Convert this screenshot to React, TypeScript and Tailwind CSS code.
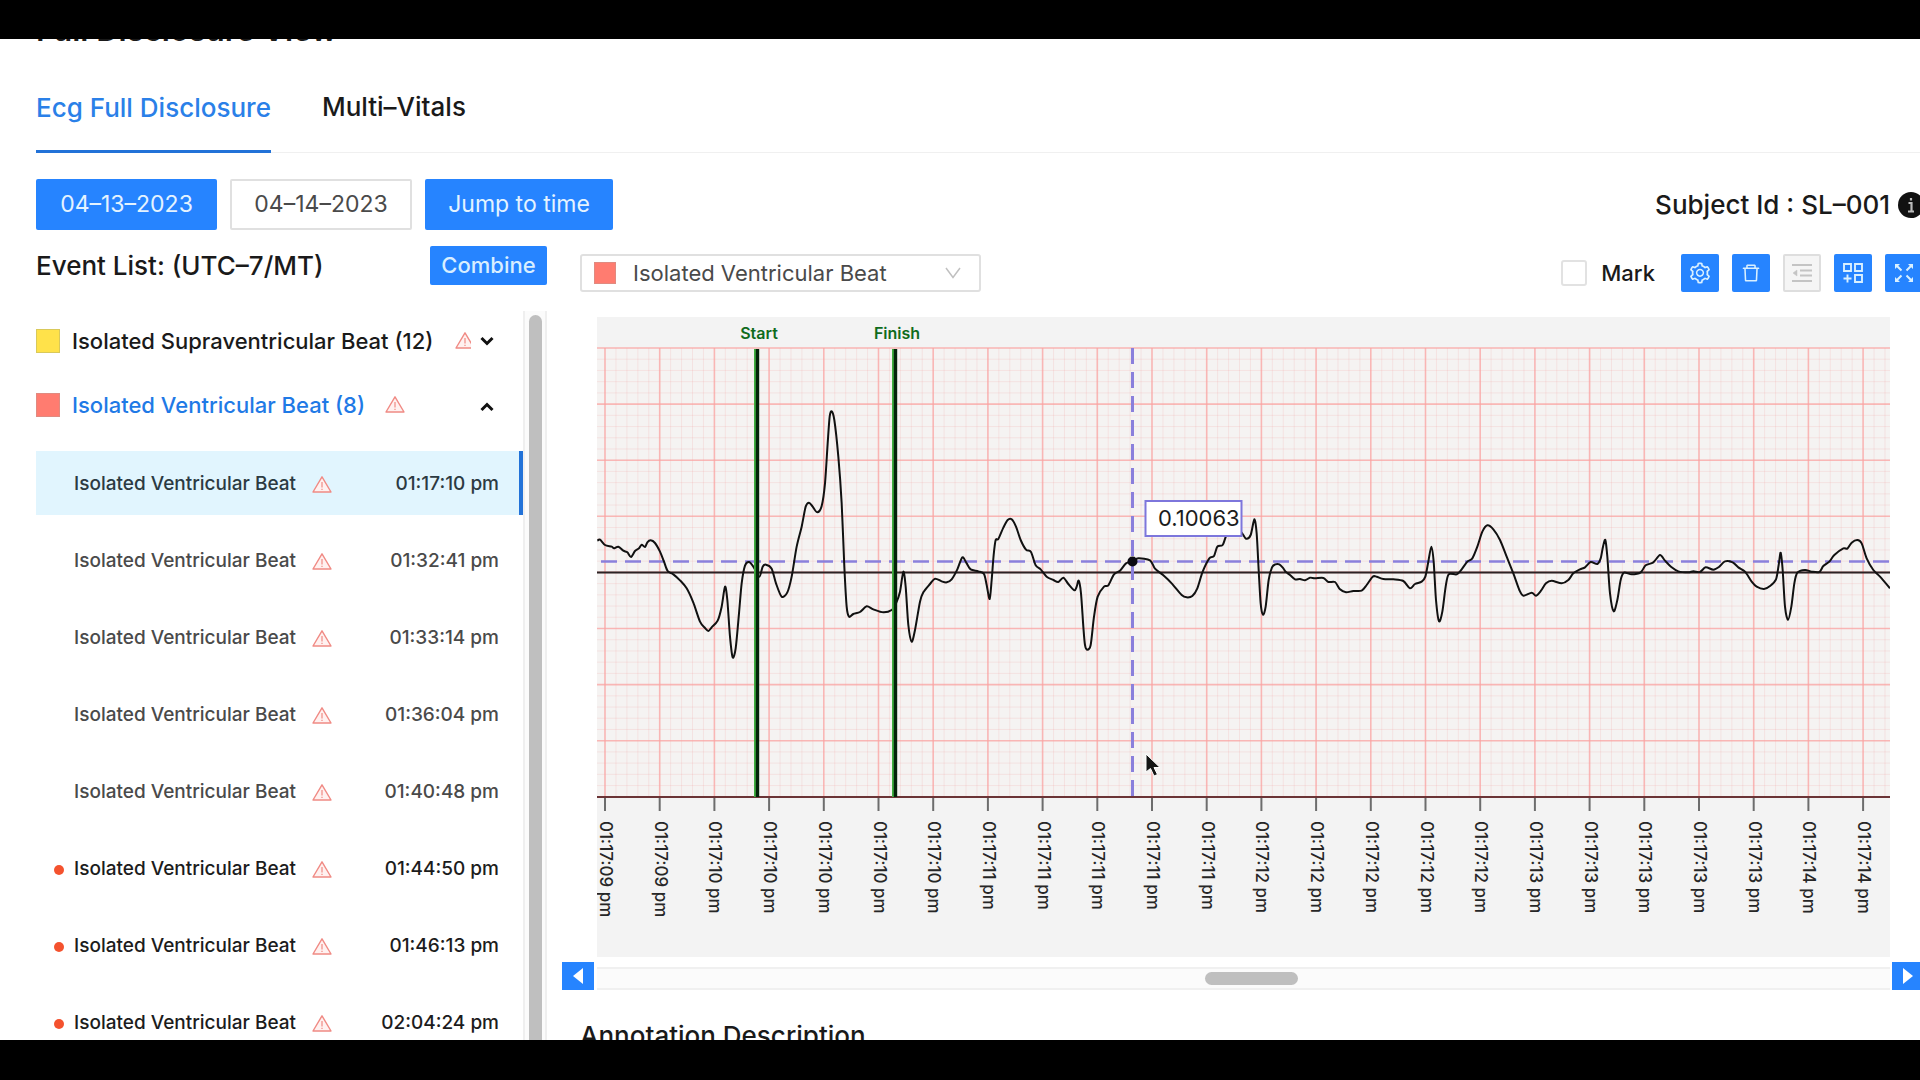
import React from "react";
import { AiOutlineSetting, AiOutlineDelete } from "react-icons/ai";

const FONT = "font-['Inter','Liberation_Sans',sans-serif]";

type EventRow = { time: string; unread?: boolean; selected?: boolean };

const EVENTS: EventRow[] = [
  { time: "01:17:10 pm", selected: true },
  { time: "01:32:41 pm" },
  { time: "01:33:14 pm" },
  { time: "01:36:04 pm" },
  { time: "01:40:48 pm" },
  { time: "01:44:50 pm", unread: true },
  { time: "01:46:13 pm", unread: true },
  { time: "02:04:24 pm", unread: true },
];

const SECONDS = ["09", "09", "10", "10", "10", "10", "10", "11", "11", "11", "11", "11", "12", "12", "12", "12", "12", "13", "13", "13", "13", "13", "14", "14"];

// Chart canvas: plot origin and grid pitch.
const W = 1293;
const H = 640;
const GRID_X = 8;
const STEP_X = 54.7;
const TOP = 31;
const BOTTOM = 480;
const STEP_Y = 56.1;

// Signal samples, three units to a pixel, in consecutive strips.
const STRIPS: { x: number; y: number; points: string }[] = [
  {
    x: -7,
    y: 63,
    points:
      "22,482 30,479 45,495 65,500 72,505 85,500 100,512 112,517 123,531 135,513 147,505 155,494 165,501 172,487 182,481 195,489 210,515 222,545 233,573 250,583 270,601 290,625 310,668 330,725 345,744 355,753 365,742 383,722 395,680 405,620 412,660 420,770 428,832 437,805 447,700 455,610 465,557 477,546 490,560 508,590 518,560 528,554 545,566 558,610 575,650 592,637 605,590 620,500 635,440 647,380 657,368 668,380 682,397 695,378 705,310 713,190 719,110 725,94 733,120 745,230 755,370 763,560 770,680 777,710 790,702 810,696 830,679 850,688 880,697 905,690 918,670 930,635 940,575 947,620 955,735 965,785 975,750 990,665 1000,637",
  },
  {
    x: 323,
    y: 163,
    points:
      "30,312 45,296 65,304 80,307 95,298 112,268 127,232 140,250 152,268 175,274 192,282 200,315 209,357 215,300 221,225 227,180 235,177 250,143 263,120 275,118 288,140 302,180 318,209 333,216 347,256 362,268 380,290 400,300 415,306 430,293 445,312 463,331 470,320 476,302 483,340 490,440 495,495 502,509 512,495 522,410 533,350 552,320 565,316 582,283 600,272 618,250 638,243 655,235 690,241 705,266 730,286 755,310 785,345 800,352 817,348 832,325 848,275 868,235 882,228 892,200 908,195 920,165 945,140 965,158 978,176 992,165 1003,118 1010,160 1016,270 1022,370 1029,404 1037,380 1046,300 1056,262 1066,253",
  },
  {
    x: 643,
    y: 163,
    points:
      "118,253 130,265 137,275 150,285 165,298 180,297 195,301 210,293 225,295 250,294 265,306 285,306 300,328 318,337 340,333 365,332 380,315 398,290 410,290 430,297 460,298 490,303 510,325 525,312 545,305 556,290 565,245 574,200 581,245 588,360 597,424 607,395 617,320 626,283 650,283 665,268 682,245 697,235 712,200 727,155 742,136 760,148 780,180 800,230 820,280 838,330 850,347 875,338 888,347 903,332 918,310 935,302 965,310 985,300 1000,280",
  },
  {
    x: 963,
    y: 163,
    points:
      "60,268 75,262 92,246 112,252 122,235 129,200 136,180 142,230 150,340 161,394 172,360 182,300 192,278 215,283 242,277 257,256 280,247 300,225 315,242 335,262 355,274 385,277 400,274 420,276 437,262 460,269 478,260 495,244 518,247 535,262 555,275 575,305 590,320 612,327 630,318 648,298 656,255 662,218 668,270 675,380 684,420 694,380 703,310 712,278 735,270 755,275 778,276 790,258 808,245 823,225 850,205 862,206 875,188 892,180 905,190 920,235 940,270 960,290 990,325",
  },
];

function signalPath(): string {
  const pts = STRIPS.flatMap((s) =>
    s.points.split(" ").map((p) => {
      const [x, y] = p.split(",").map(Number);
      return [s.x + x / 3, s.y + y / 3];
    }),
  );
  let d = `M${pts[0][0]} ${pts[0][1]}`;
  for (let i = 0; i < pts.length - 1; i++) {
    const a = pts[Math.max(i - 1, 0)];
    const b = pts[i];
    const c = pts[i + 1];
    const e = pts[Math.min(i + 2, pts.length - 1)];
    const k = 7;
    d += `C${b[0] + (c[0] - a[0]) / k} ${b[1] + (c[1] - a[1]) / k} ${c[0] - (e[0] - b[0]) / k} ${c[1] - (e[1] - b[1]) / k} ${c[0]} ${c[1]}`;
  }
  return d;
}

function EcgChart() {
  const minorX = Array.from({ length: 119 }, (_, i) => GRID_X + (i * STEP_X) / 5).filter((x) => x < W);
  const minorY = Array.from({ length: 40 }, (_, i) => TOP + (i * STEP_Y) / 5);
  return (
    <svg viewBox={`0 0 ${W} ${H}`} className="block h-auto w-full" role="img" aria-label="ECG trace">
      <rect width={W} height={H} fill="#f3f3f3" />
      <rect y={TOP} width={W} height={BOTTOM - TOP} fill="#f5f3f2" />
      {minorX.map((x) => (
        <path key={x} d={`M${x} ${TOP}V${BOTTOM}`} stroke="#f08080" strokeOpacity="0.14" />
      ))}
      {minorY.map((y) => (
        <path key={y} d={`M0 ${y}H${W}`} stroke="#f08080" strokeOpacity="0.14" />
      ))}
      {SECONDS.map((_, i) => (
        <path key={i} d={`M${GRID_X + i * STEP_X} ${TOP}V${BOTTOM}`} stroke="#fba3a1" strokeOpacity="0.7" strokeWidth="1.6" />
      ))}
      {Array.from({ length: 9 }, (_, i) => (
        <path key={i} d={`M0 ${TOP + i * STEP_Y}H${W}`} stroke="#fba3a1" strokeOpacity="0.7" strokeWidth="1.6" />
      ))}
      <path d={`M0 255.5H${W}`} stroke="#2b2325" strokeWidth="2" />
      <path d={`M0 480H${W}`} stroke="#6b3436" strokeWidth="2" />
      <path d={`M4 244.5H${W}`} stroke="#8a80dc" strokeWidth="2.4" strokeDasharray="16 8" />
      <path d={`M535.5 ${TOP}V${BOTTOM}`} stroke="#8a80dc" strokeWidth="3" strokeDasharray="16 8" />
      <path d={signalPath()} fill="none" stroke="#111" strokeWidth="2" strokeLinejoin="round" />
      {[160, 298].map((x) => (
        <g key={x}>
          <path d={`M${x - 1} ${TOP + 1}V${BOTTOM}`} stroke="#3fae3f" strokeWidth="4" />
          <path d={`M${x + 0.5} ${TOP + 1}V${BOTTOM}`} stroke="#03230a" strokeWidth="3.4" />
        </g>
      ))}
      <g className="text-[16px] font-semibold" fill="#0f6b1c" textAnchor="middle">
        <text x="162" y="22">Start</text>
        <text x="300" y="22">Finish</text>
      </g>
      <circle cx="535.5" cy="244.5" r="5" fill="#0b0b12" />
      <rect x="548.5" y="184" width="96" height="35" fill="#fff" stroke="#7d76dc" strokeWidth="2" />
      <text x="561" y="209" className="text-[22px]" fill="#1c1c1c">0.10063</text>
      {SECONDS.map((s, i) => (
        <g key={i}>
          <path d={`M${GRID_X + i * STEP_X} 481V494`} stroke="#6d6d6d" strokeWidth="2" />
          <text transform={`translate(${GRID_X + i * STEP_X - 5} 504) rotate(90)`} className="text-[17px] font-medium" fill="#262626">
            {`01:17:${s} pm`}
          </text>
        </g>
      ))}
      <path d="M549 437V455L553.5 451.5L557 459L560.5 457.5L557 450.5H563Z" fill="#151515" stroke="#fff" strokeWidth="1" />
    </svg>
  );
}

function Warning({ className = "" }: { className?: string }) {
  return (
    <svg viewBox="0 0 20 18" className={`h-[18px] w-5 shrink-0 ${className}`} aria-hidden="true">
      <path d="M10 0.8L19 16H1Z" fill="#fff1f0" stroke="#f08a84" strokeWidth="1.4" strokeLinejoin="round" />
      <path d="M10 6V11.5M10 12.7V14.1" stroke="#f08a84" strokeWidth="1.2" />
    </svg>
  );
}

function Chevron({ up = false }: { up?: boolean }) {
  return (
    <svg viewBox="0 0 16 16" className="h-4 w-4 shrink-0" fill="none" stroke="#111" strokeWidth="3" aria-hidden="true">
      <path d={up ? "M2.5 13L8 7.5L13.5 13" : "M2.5 5L8 10.5L13.5 5"} />
    </svg>
  );
}

function OutdentIcon() {
  return (
    <svg viewBox="0 0 22 22" className="h-[22px] w-[22px]" stroke="#c4c4c4" strokeWidth="1.8" aria-hidden="true">
      <path d="M1 3H21M9 8.5H21M9 13.5H21M1 19H21" />
      <path d="M6 8L2 11L6 14Z" fill="#c4c4c4" strokeWidth="0.5" />
    </svg>
  );
}

function GridAddIcon() {
  return (
    <svg viewBox="0 0 22 22" className="h-[22px] w-[22px]" fill="none" stroke="#d9f0ff" strokeWidth="1.9" aria-hidden="true">
      <path d="M2 2H9V9H2ZM13 2H20V9H13ZM13 13H20V20H13ZM5.5 12.5V20.5M1.5 16.5H9.5" />
    </svg>
  );
}

function ExpandIcon() {
  return (
    <svg viewBox="0 0 22 22" className="h-[22px] w-[22px]" stroke="#d9f0ff" strokeWidth="2" aria-hidden="true">
      <path d="M8.5 8.5L4 4M13.5 8.5L18 4M8.5 13.5L4 18M13.5 13.5L18 18" />
      <path d="M2 2H7L2 7ZM20 2H15L20 7ZM2 20H7L2 15ZM20 20H15L20 15Z" fill="#d9f0ff" strokeWidth="0" />
    </svg>
  );
}

const TOOL = "flex h-[38px] w-[38px] shrink-0 items-center justify-center rounded-[2px]";

export default function App() {
  return (
    <div className={`flex h-screen flex-col overflow-hidden bg-white text-[#1a1a1a] ${FONT}`}>
      <div className="h-[39px] shrink-0 bg-black" />
      <main className="flex min-h-0 flex-1 flex-col overflow-hidden pl-9">
        <h1 className="-mt-[25px] shrink-0 text-[31px] leading-8 font-semibold">Full Disclosure View</h1>
        <nav className="mt-[15px] flex h-[92px] shrink-0 gap-[51px] border-b border-[#f0f0f0]">
          <button className="-mb-px border-b-[3px] border-[#2272d8] pt-[3px] text-[26px] font-medium text-[#2a80e8]">Ecg Full Disclosure</button>
          <button className="text-[26px] font-medium">Multi–Vitals</button>
        </nav>

        <div className="mt-[26px] flex h-[51px] shrink-0 items-stretch gap-[13px] text-[23px]">
          <button className="w-[181px] rounded-[2px] bg-[#2684ff] text-[#e4f3ff]">04–13–2023</button>
          <button className="w-[182px] rounded-[2px] border-2 border-[#e0e0e0] text-[#4a4a4a]">04–14–2023</button>
          <button className="w-[188px] rounded-[2px] bg-[#2684ff] text-[#e4f3ff]">Jump to time</button>
          <div className="-mr-1 ml-auto flex items-center gap-2 text-[26px] font-medium">
            <span>Subject Id : SL–001</span>
            <svg viewBox="0 0 26 26" className="h-[26px] w-[26px]" aria-hidden="true">
              <circle cx="13" cy="13" r="13" fill="#111" />
              <path d="M13 6V8.6M10.5 11H13.5V19M10 19.5H16" stroke="#bbb" strokeWidth="2.2" fill="none" />
            </svg>
          </div>
        </div>

        <div className="flex min-h-0 flex-1 gap-[15px]">
          <section className="flex w-[511px] shrink-0 flex-col">
            <div className="mt-4 flex h-[39px] shrink-0 items-center justify-between">
              <h2 className="text-[26px] font-medium">Event List: (UTC–7/MT)</h2>
              <button className="h-[39px] w-[117px] rounded-[2px] bg-[#2684ff] text-[22px] font-medium text-[#d8eeff]">Combine</button>
            </div>
            <div className="mt-6 flex min-h-0 flex-1 overflow-hidden">
              <div className="flex flex-1 flex-col">
                <button className="flex h-16 shrink-0 items-center pr-7 text-left text-[22px] font-medium whitespace-nowrap">
                  <span className="mr-3 h-6 w-6 shrink-0 border border-[#d9c95a] bg-[#ffe24a]" />
                  <span>Isolated Supraventricular Beat (12)</span>
                  <span className="ml-auto flex w-4 shrink-0 overflow-hidden">
                    <Warning />
                  </span>
                  <span className="ml-2">
                    <Chevron />
                  </span>
                </button>
                <button className="flex h-16 shrink-0 items-center pr-7 text-left text-[22px] font-medium text-[#1f7ae6]">
                  <span className="mr-3 h-6 w-6 shrink-0 border border-[#e08a80] bg-[#ff7c70]" />
                  <span>Isolated Ventricular Beat (8)</span>
                  <Warning className="ml-5" />
                  <span className="ml-auto">
                    <Chevron up />
                  </span>
                </button>
                <ul className="mt-[14px] flex flex-col gap-[13px]">
                  {EVENTS.map((e) => (
                    <li key={e.time}>
                      <button
                        className={`flex h-16 w-full items-center border-r-4 pt-[3px] pr-5 pl-[18px] text-left text-[19px] font-medium ${
                          e.selected ? "border-[#2272d8] bg-[#e1f5fe] text-[#2c3a42]" : e.unread ? "border-transparent text-[#1c1c1c]" : "border-transparent text-[#4a4a4a]"
                        }`}
                      >
                        <span className={`mr-2.5 h-2.5 w-2.5 rounded-full ${e.unread ? "bg-[#f4522e]" : ""}`} />
                        <span>Isolated Ventricular Beat</span>
                        <Warning className="ml-4" />
                        <span className="ml-auto">{e.time}</span>
                      </button>
                    </li>
                  ))}
                </ul>
              </div>
              <div className="mt-0.5 flex w-6 shrink-0 justify-center border-x-2 border-[#efefef] bg-[#fbfbfb] pt-1">
                <div className="w-[13px] rounded-t-full bg-[#bfbfbf]" />
              </div>
            </div>
          </section>

          <section className="-mr-1 flex min-w-0 flex-1 flex-col">
            <div className="mt-6 flex h-[38px] shrink-0 items-center pl-[18px]">
              <div className="relative">
                <select
                  aria-label="Beat type"
                  className="h-[38px] w-[401px] appearance-none rounded-[3px] border-2 border-[#e0e0e0] bg-white pl-[51px] text-[22px] leading-none text-[#4a4a4a]"
                >
                  <option>Isolated Ventricular Beat</option>
                </select>
                <span className="pointer-events-none absolute top-2 left-3.5 h-[22px] w-[22px] border border-[#e08a80] bg-[#ff7c70]" />
                <svg viewBox="0 0 16 12" className="pointer-events-none absolute top-[13px] right-5 h-3 w-4" fill="none" stroke="#c0c0c0" strokeWidth="1.5" aria-hidden="true">
                  <path d="M1 1L8 10.5L15 1" />
                </svg>
              </div>
              <label className="ml-auto flex shrink-0 items-center gap-3.5 text-[22px] font-medium">
                <input type="checkbox" className="h-[26px] w-[26px] appearance-none rounded-[3px] border-2 border-[#e2e2e2] bg-white" />
                Mark
              </label>
              <div className="mr-px ml-[26px] flex shrink-0 gap-[13px]">
                <button aria-label="Settings" className={`${TOOL} bg-[#2684ff] text-[#d9f0ff]`}>
                  <AiOutlineSetting className="h-6 w-6" />
                </button>
                <button aria-label="Delete" className={`${TOOL} bg-[#2684ff] text-[#d9f0ff]`}>
                  <AiOutlineDelete className="h-[22px] w-[22px]" />
                </button>
                <button aria-label="Outdent" className={`${TOOL} border-2 border-[#dedede] bg-[#f5f5f5]`}>
                  <OutdentIcon />
                </button>
                <button aria-label="Add panel" className={`${TOOL} bg-[#2684ff]`}>
                  <GridAddIcon />
                </button>
                <button aria-label="Full screen" className={`${TOOL} bg-[#2684ff]`}>
                  <ExpandIcon />
                </button>
              </div>
            </div>

            <div className="mt-[25px] mr-[34px] ml-[35px] shrink-0">
              <EcgChart />
            </div>

            <div className="mt-[5px] flex h-7 shrink-0 items-stretch">
              <button aria-label="Scroll left" className="flex w-8 items-center justify-center bg-[#2684ff]">
                <svg viewBox="0 0 12 18" className="h-[18px] w-3" fill="#fff" aria-hidden="true">
                  <path d="M11 1V17L1 9Z" />
                </svg>
              </button>
              <div className="mt-[5px] mr-0.5 ml-[3px] flex flex-1 items-center border-y-2 border-[#f0f0f0] bg-[#fbfbfb]">
                <div className="ml-[47%] h-[13px] w-[93px] rounded-full bg-[#bfbfbf]" />
              </div>
              <button aria-label="Scroll right" className="flex w-8 items-center justify-center bg-[#2684ff]">
                <svg viewBox="0 0 12 18" className="h-[18px] w-3" fill="#fff" aria-hidden="true">
                  <path d="M1 1V17L11 9Z" />
                </svg>
              </button>
            </div>
            <h2 className="mt-[30px] shrink-0 pl-[18px] text-[26px] leading-8 font-medium">Annotation Description</h2>
          </section>
        </div>
      </main>
      <div className="h-10 shrink-0 bg-black" />
    </div>
  );
}
